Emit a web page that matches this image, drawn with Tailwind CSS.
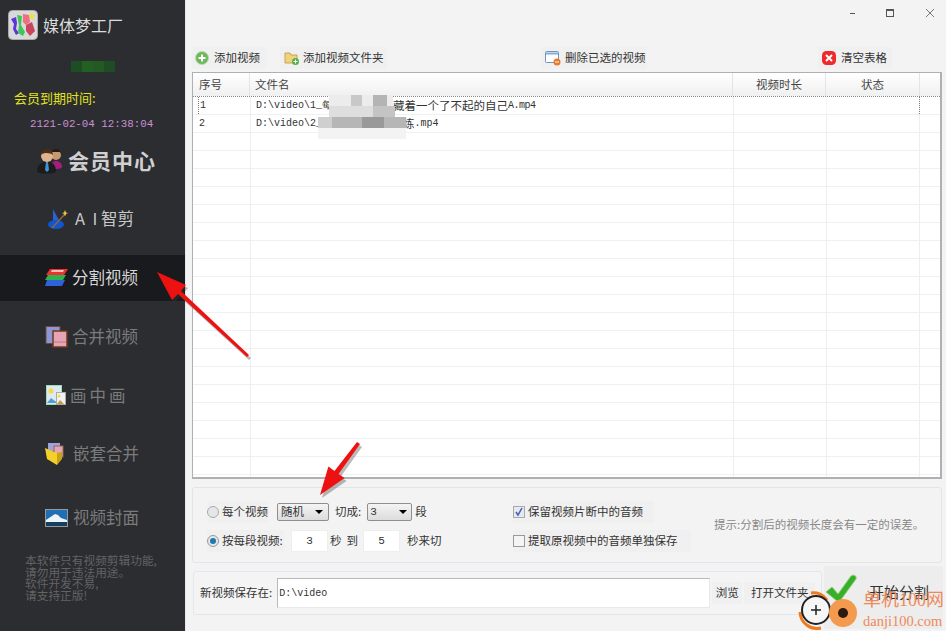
<!DOCTYPE html>
<html lang="zh">
<head>
<meta charset="utf-8">
<script src="https://cdn.jsdelivr.net/npm/@tailwindcss/browser@4"></script>
</head>
<body class="m-0">
<div class="relative w-[946px] h-[631px] overflow-hidden flex bg-[#f3f3f3] text-[11.5px] text-[#333] font-['Noto_Sans_CJK_SC','Noto_Sans',sans-serif]">

  <!-- Sidebar -->
  <aside class="w-[186px] h-full shrink-0 bg-[#2b2d31] border-r border-[#e8e8e8] flex flex-col">
    <div class="h-[43px] pt-[6px] pl-[8px] flex items-center gap-[5px]">
      <svg width="30" height="30" viewBox="0 0 30 30" class="shrink-0">
        <rect x="0.5" y="0.5" width="29" height="29" rx="4" fill="#d9d9d9" stroke="#aaa"/>
        <path d="M3 9l5-2 1 6-1 6 3 4-3 2-3-6 1-5z" fill="#5b35d8"/>
        <path d="M9 5l5 1-1 9 4 7-2 4-5-3 1-8z" fill="#3cc65b"/>
        <path d="M15 4l6 1 1 7-4 3-3-3z" fill="#ef6f7c"/>
        <path d="M22 3l5 2-2 5-3-2z" fill="#e9e04a"/>
        <path d="M18 15l6-3 3 9-5 5-4-5z" fill="#c9465e"/>
      </svg>
      <span class="text-[16px] leading-none text-[#dcdcdc]">媒体梦工厂</span>
    </div>
    <div class="h-[29px] flex items-end justify-center">
      <div class="flex h-[11px]">
        <div class="w-[11px] bg-[#1d4d23]"></div><div class="w-[11px] bg-[#215f23]"></div><div class="w-[11px] bg-[#235a24]"></div><div class="w-[11px] bg-[#1f4c24]"></div>
      </div>
    </div>
    <div class="mt-[16px] pl-[14px] h-[20px] leading-[20px] text-[13px] text-[#e2e21f]">会员到期时间:</div>
    <div class="mt-[7px] pl-[30px] h-[18px] leading-[18px] text-[10.800px] text-[#cc8fd4] font-['Liberation_Mono',monospace] whitespace-nowrap">2121-02-04 12:38:04</div>
    <nav class="mt-[-2px] flex flex-col">
      <div class="h-[58px] flex items-center gap-[3px] pl-[37px]">
        <svg width="28" height="28" viewBox="0 0 28 28" class="shrink-0">
          <circle cx="19" cy="9" r="5" fill="#c8996f"/><path d="M14 8a5 5 0 0 1 10 0l-1-2h-8z" fill="#2a1a12"/>
          <path d="M14 22c0-5 2-7 5-7s6 2 6 6c0 1-3 2-6 2z" fill="#a31f7d"/>
          <circle cx="10" cy="10" r="6" fill="#e0b48e"/><path d="M4 9a6 6 0 0 1 12 0c-2-2-9-3-12 0z" fill="#4c2e1a"/>
          <path d="M0 26c0-7 4-10 10-10s9 3 9 10c-4 2-15 2-19 0z" fill="#1c1c1c"/><path d="M9 16h2l1 8-2 2-2-2z" fill="#3f93d6"/>
        </svg>
        <span class="text-[21px] leading-none font-bold text-[#d0d0d0] font-['Noto_Sans_CJK_JP',serif] tracking-[1px]">会员中心</span>
      </div>
      <div class="h-[59px] flex items-center gap-[7px] pl-[48px]">
        <svg width="20" height="22" viewBox="0 0 20 22" class="shrink-0">
          <path d="M5 1l7 13H5z" fill="#2f5fd0"/><ellipse cx="8" cy="16.500" rx="8" ry="4.500" fill="#1255cc"/>
          <path d="M4 20L17 6" stroke="#8a6a3a" stroke-width="1.500"/><path d="M17 2l1 2.500 2 .5-2 1-1 2.500-1-2.500-2-1 2-.5z" fill="#f2c53a"/>
        </svg>
        <span class="text-[16.500px] leading-none text-[#c8c8c8] whitespace-pre">A  I 智剪</span>
      </div>
      <div class="h-[59px] flex items-center">
        <div class="w-full h-[46px] bg-[#191a1d] flex items-center gap-[4px] pl-[45px]">
          <svg width="23" height="18" viewBox="0 0 23 18" class="shrink-0">
            <path d="M5 0h18l-4 6H1z" fill="#ef3030"/><path d="M7 1h12l-1 2H6z" fill="#fbb"/>
            <path d="M3 6h18l-3 5H0z" fill="#2fb24a"/>
            <path d="M2 11h18l-3 6H0z" fill="#2d62d8"/>
          </svg>
          <span class="text-[16.500px] leading-none text-[#d6d6d6]">分割视频</span>
        </div>
      </div>
      <div class="h-[59px] flex items-center gap-[4px] pl-[45px]">
        <svg width="23" height="22" viewBox="0 0 23 22" class="shrink-0">
          <rect x="1" y="0.500" width="14" height="17" fill="#8f96d8" stroke="#6a4a30"/>
          <rect x="8" y="5" width="14" height="16" fill="#e6a4b4" stroke="#6d3a1e" stroke-width="1.500"/>
          <path d="M9 16h12" stroke="#b57f80"/>
        </svg>
        <span class="text-[16.500px] leading-none text-[#7b7b7b]">合并视频</span>
      </div>
      <div class="h-[58px] flex items-center gap-[4px] pl-[46px]">
        <svg width="20" height="20" viewBox="0 0 20 20" class="shrink-0">
          <rect x="0.500" y="0.500" width="15" height="19" fill="#dfe9f1" stroke="#9db"/>
          <circle cx="5" cy="6" r="2.500" fill="#f4dd3a"/><path d="M1 18l4-5 4 3 3 2z" fill="#4fa2cf"/>
          <rect x="10.500" y="7.500" width="9" height="12" fill="#eef2f5" stroke="#aaa"/>
          <circle cx="13" cy="11" r="1.500" fill="#f4dd3a"/><path d="M11 19l3-4 4 4z" fill="#c99a3f"/>
        </svg>
        <span class="text-[16.500px] leading-none text-[#7b7b7b] tracking-[3px]">画中画</span>
      </div>
      <div class="h-[59px] flex items-center gap-[9px] pl-[45px]">
        <svg width="19" height="22" viewBox="0 0 19 22" class="shrink-0">
          <rect x="3" y="0" width="12" height="8" fill="#9ea3dc"/><rect x="9" y="3" width="9" height="11" fill="#e6a4b4" stroke="#8a6a55"/>
          <path d="M0 5l12 5v12L2 16z" fill="#f5d028"/><path d="M12 10l5-1v7l-5 6z" fill="#c9a21a"/>
        </svg>
        <span class="text-[16.500px] leading-none text-[#7b7b7b]">嵌套合并</span>
      </div>
      <div class="mt-[5px] h-[59px] flex items-center gap-[5px] pl-[45px]">
        <svg width="23" height="18" viewBox="0 0 23 18" class="shrink-0">
          <rect x="0.500" y="0.500" width="22" height="17" fill="#1f6fb8" stroke="#999"/>
          <path d="M1 11l6-4 3-2 3 1 3 3 6 2v2H1z" fill="#eef3f6"/>
          <rect x="1" y="13" width="21" height="4" fill="#123f63"/>
        </svg>
        <span class="text-[16.500px] leading-none text-[#7b7b7b]">视频封面</span>
      </div>
    </nav>
    <p class="mt-[7px] pl-[25px] text-[11.700px] leading-[11.500px] text-[#636363] whitespace-nowrap">本软件只有视频剪辑功能,<br>请勿用于违法用途。<br>软件开发不易,<br>请支持正版!</p>
  </aside>

  <!-- Main -->
  <main class="flex-1 min-w-0 flex flex-col">
    <!-- window controls -->
    <div class="h-[47px] relative shrink-0">
      <div class="absolute top-[8px] right-[11px] flex items-center text-[#555]">
        <svg width="10" height="10" viewBox="0 0 10 10"><path d="M2 5.500h5" stroke="#555"/></svg>
        <svg class="ml-[27px]" width="10" height="10" viewBox="0 0 10 10"><rect x="1.500" y="1.500" width="7" height="7" fill="none" stroke="#555"/><path d="M1.500 2.500h7" stroke="#555"/></svg>
        <svg class="ml-[30px]" width="10" height="10" viewBox="0 0 10 10"><path d="M1 1l8 8M9 1l-8 8" stroke="#777"/></svg>
      </div>
    </div>
    <!-- toolbar -->
    <div class="h-[25px] shrink-0 flex pl-[6px]">
      <div class="w-[74px] h-[22px] bg-[#f0f0f0] flex items-center gap-[5px] pl-[3px]">
        <svg width="14" height="14" viewBox="0 0 14 14"><circle cx="7" cy="7" r="6.500" fill="#6db85a" stroke="#b9dcae"/><path d="M7 3.500v7M3.500 7h7" stroke="#fff" stroke-width="2"/></svg>
        <span>添加视频</span>
      </div>
      <div class="ml-[14px] w-[107px] h-[22px] bg-[#f0f0f0] flex items-center gap-[4px] pl-[4px]">
        <svg width="15" height="14" viewBox="0 0 15 14"><path d="M1 2h5l1 2h6v8H1z" fill="#f0d27e" stroke="#c9a24e"/><circle cx="11.500" cy="10.500" r="3.500" fill="#55b04a"/><path d="M11.500 8.500v4M9.500 10.500h4" stroke="#fff"/></svg>
        <span>添加视频文件夹</span>
      </div>
      <div class="ml-[154px] w-[106px] h-[22px] bg-[#f0f0f0] flex items-center gap-[4px] pl-[4px]">
        <svg width="16" height="15" viewBox="0 0 16 15"><rect x="0.500" y="0.500" width="13" height="11" rx="1" fill="#fff" stroke="#6f93bd"/><path d="M1 1.500h12v2H1z" fill="#86abd6"/><circle cx="12" cy="11" r="3.500" fill="#e8792b"/><path d="M10 11h4" stroke="#fff"/></svg>
        <span>删除已选的视频</span>
      </div>
      <div class="ml-[171px] w-[74px] h-[22px] bg-[#f0f0f0] flex items-center gap-[5px] pl-[4px]">
        <svg width="14" height="14" viewBox="0 0 14 14"><rect x="0" y="0" width="14" height="14" rx="4.500" fill="#ee2a2a"/><path d="M4 4l6 6M10 4l-6 6" stroke="#fff" stroke-width="2"/></svg>
        <span>清空表格</span>
      </div>
    </div>

    <!-- table -->
    <div class="ml-[6px] w-[750px] h-[407px] shrink-0 bg-white border border-[#aeb0b4] border-b-2 border-r-2 flex flex-col overflow-hidden">
      <div class="h-[24px] shrink-0 flex items-center bg-gradient-to-b from-white to-[#f0f0f0] text-[#444] border-b border-dotted border-[#888]">
        <div class="w-[57px] h-full pl-[6px] flex items-center border-r border-[#e4e4e4]">序号</div>
        <div class="w-[483px] h-full pl-[5px] flex items-center border-r border-[#e4e4e4]">文件名</div>
        <div class="w-[93px] h-full flex items-center justify-center border-r border-[#e4e4e4]">视频时长</div>
        <div class="w-[94px] h-full flex items-center justify-center border-r border-[#e4e4e4]">状态</div>
      </div>
      <div class="flex h-[18px] shrink-0 border-b border-[#f0f0f0] text-[10px] items-center text-[#333]"><div class="ml-[5px] w-[52px] h-full pl-[1px] border-l border-dotted border-[#777] flex items-center font-['Liberation_Mono',monospace]">1</div><div class="w-[483px] h-full pl-[5px] flex items-center border-l border-[#eee] whitespace-pre"><span class="font-['Liberation_Mono',monospace]">D:\video\1_每</span><span class="ml-[61px] text-[11.500px]">藏着一个了不起的自己</span><span class="font-['Liberation_Mono',monospace] tracking-[-0.500px]">A.mp4</span></div><div class="w-[93px] h-full border-l border-[#eee]"></div><div class="w-[94px] h-full border-l border-[#eee] border-r border-dotted border-r-[#777]"></div></div>
      <div class="flex h-[18px] shrink-0 border-b border-[#f0f0f0] text-[10px] items-center text-[#333]"><div class="ml-[5px] w-[52px] h-full pl-[1px] flex items-center font-['Liberation_Mono',monospace]">2</div><div class="w-[483px] h-full pl-[5px] flex items-center border-l border-[#eee] whitespace-pre"><span class="font-['Liberation_Mono',monospace]">D:\video\2_</span><span class="ml-[81px] text-[11.500px]">练</span><span class="font-['Liberation_Mono',monospace]">.mp4</span></div><div class="w-[93px] h-full border-l border-[#eee]"></div><div class="w-[94px] h-full border-x border-[#eee]"></div></div>
      <!-- empty rows -->
      <div class="flex-1 min-h-0 bg-[repeating-linear-gradient(to_bottom,white_0,white_17px,#f0f0f0_17px,#f0f0f0_18px)] flex">
        <div class="w-[57px] h-full"></div>
        <div class="w-[483px] h-full border-l border-[#eee]"></div>
        <div class="w-[93px] h-full border-l border-[#eee]"></div>
        <div class="w-[94px] h-full border-x border-[#eee]"></div>
      </div>
    </div>

    <!-- options -->
    <div class="ml-[6px] mt-[8px] w-[750px] h-[76px] shrink-0 border border-[#dfe5ea] rounded-[3px] flex">
      <div class="w-[320px] pl-[14px] pt-[13px] flex flex-col gap-[7px]">
        <div class="h-[22px] flex items-center">
          <div class="w-[62px] h-[22px] bg-[#f0f0f0] flex items-center gap-[3px]">
            <span class="w-[12px] h-[12px] rounded-full border border-[#aaa] bg-[#e6e6e6] shrink-0"></span><span class="whitespace-nowrap">每个视频</span>
          </div>
          <div class="ml-[8px] w-[52px] h-[18px] border border-[#8e8e8e] rounded-[2px] bg-gradient-to-b from-[#f4f4f4] to-[#dcdcdc] flex items-center justify-between px-[3px]"><span>随机</span><span class="w-0 h-0 border-x-[4px] border-x-transparent border-t-[4px] border-t-black mr-[2px]"></span></div>
          <span class="ml-[6px]">切成:</span>
          <div class="ml-[6px] w-[45px] h-[18px] border border-[#8e8e8e] rounded-[2px] bg-gradient-to-b from-[#f4f4f4] to-[#dcdcdc] flex items-center justify-between px-[2px] font-['Liberation_Mono',monospace] text-[11px]"><span>3</span><span class="w-0 h-0 border-x-[4px] border-x-transparent border-t-[4px] border-t-black mr-[2px]"></span></div>
          <span class="ml-[3px]">段</span>
        </div>
        <div class="h-[22px] flex items-center">
          <div class="w-[77px] h-[22px] bg-[#f0f0f0] flex items-center gap-[3px]">
            <span class="w-[12px] h-[12px] rounded-full border border-[#999] bg-[#e6e6e6] shrink-0 flex items-center justify-center"><span class="w-[6px] h-[6px] rounded-full bg-[#1f78b4]"></span></span><span class="whitespace-nowrap">按每段视频:</span>
          </div>
          <div class="ml-[7px] w-[37px] h-[22px] bg-white border border-[#eee] flex items-center justify-center font-['Liberation_Mono',monospace] text-[11px]">3</div>
          <span class="ml-[2px]">秒</span>
          <span class="ml-[5px]">到</span>
          <div class="ml-[5px] w-[37px] h-[22px] bg-white border border-[#eee] flex items-center justify-center font-['Liberation_Mono',monospace] text-[11px]">5</div>
          <span class="ml-[7px]">秒来切</span>
        </div>
      </div>
      <div class="w-[201px] pt-[13px] flex flex-col gap-[7px]">
        <div class="w-[141px] h-[22px] bg-[#f0f0f0] flex items-center gap-[3px] whitespace-nowrap"><span class="w-[12px] h-[12px] border border-[#aaa] bg-[#e4e8f2] flex items-center justify-center shrink-0"><svg width="10" height="10" viewBox="0 0 10 10"><path d="M2 5l2 3 4-7" fill="none" stroke="#4a5fa8" stroke-width="1.500"/></svg></span>保留视频片断中的音频</div>
        <div class="w-[178px] h-[22px] bg-[#f0f0f0] flex items-center gap-[3px] whitespace-nowrap"><span class="w-[12px] h-[12px] border border-[#999] bg-[#f4f4f4] shrink-0"></span>提取原视频中的音频单独保存</div>
      </div>
      <div class="pt-[28px] text-[#888] whitespace-nowrap">提示:分割后的视频长度会有一定的误差。</div>
    </div>

    <!-- save row -->
    <div class="ml-[6px] mt-[3px] flex h-[63px]">
      <div class="mt-[5px] ml-[1px] w-[629px] h-[44px] border border-[#e3e7ea] rounded-[3px] bg-[#f4f4f4] flex items-center pl-[6px] whitespace-nowrap">
        <span>新视频保存在:</span>
        <div class="ml-[5px] w-[433px] h-[30px] bg-white border border-[#b8b8b8] border-b-[#e8e8e8] border-r-[#e8e8e8] flex items-center pl-[1px] text-[10px] font-['Liberation_Mono',monospace]">D:\video</div>
        <div class="ml-[2px] w-[30px] h-[22px] bg-[#f0f0f0] flex items-center justify-center">浏览</div>
        <div class="ml-[2px] w-[71px] h-[22px] bg-[#f0f0f0] flex items-center justify-center">打开文件夹</div>
      </div>
      <div class="ml-[2px] w-[119px] h-[63px] bg-[#ededed] flex items-start pl-[45px] pt-[15px] text-[15px] whitespace-nowrap text-[#333]">开始分割</div>
    </div>
  </main>

  <!-- Overlays: mosaic over filenames -->
  <svg class="absolute left-[315px] top-[93px] pointer-events-none" width="100" height="48" viewBox="0 0 100 48">
    <g>
      <rect x="14" y="2" width="64" height="11" fill="#ececec"/><rect x="36" y="2" width="11" height="11" fill="#c8c8c8"/><rect x="58" y="2" width="14" height="11" fill="#b4b4b4"/>
      <rect x="14" y="13" width="66" height="11" fill="#dedede"/><rect x="58" y="13" width="22" height="11" fill="#c4c4c4"/>
      <rect x="3" y="24" width="88" height="11" fill="#b6b6b6"/><rect x="47" y="24" width="22" height="11" fill="#999"/><rect x="3" y="24" width="14" height="11" fill="#cfcfcf"/>
      <rect x="3" y="35" width="88" height="11" fill="#f3f3f3"/>
    </g>
  </svg>

  <!-- Red arrows -->
  <svg class="absolute inset-0 pointer-events-none" width="946" height="631" viewBox="0 0 946 631">
    <g fill="#3a3a3a" opacity="0.35" transform="translate(2 3)">
      <path d="M157 272L186 285 181 291 249 355 247 357 178 294 172 300z"/>
      <path d="M320 495L328.400 466.500 334.500 471 357 442 360 444 338.500 474 344.600 478z"/>
    </g>
    <path d="M157 272L186 285 181 291 249 355 247 357 178 294 172 300z" fill="#ee1111"/>
    <path d="M320 495L328.400 466.500 334.500 471 357 442 360 444 338.500 474 344.600 478z" fill="#ee1111"/>
  </svg>

  <!-- Start check -->
  <svg class="absolute left-[824px] top-[574px] pointer-events-none" width="34" height="30" viewBox="0 0 34 30">
    <path d="M2 18l6-5 6 7L27 2c3-2 6 0 5 3L16 27h-3z" fill="#36b02a" stroke="#8fcf70"/>
  </svg>

  <!-- Watermark -->
  <div class="absolute left-[797px] top-[590px] w-[149px] h-[41px] pointer-events-none">
    <svg class="absolute left-0 top-0" width="66" height="41" viewBox="0 0 66 41">
      <path d="M3 22A17 17 0 0 0 24 38" fill="none" stroke="#f07a20" stroke-width="3"/>
      <path d="M14 3A16 16 0 0 1 30 10" fill="none" stroke="#f07a20" stroke-width="3"/>
      <circle cx="19" cy="20" r="14" fill="#f6f6f6" stroke="#222" stroke-width="2"/>
      <path d="M19 15v10M14 20h10" stroke="#222" stroke-width="1.500"/>
      <circle cx="46" cy="23" r="14" fill="#f39a4e"/>
      <circle cx="46" cy="23" r="5" fill="#2a1a10"/>
    </svg>
    <span class="absolute left-[66px] top-[-2px] text-[18px] leading-[24px] text-[#ee8a5a] font-['Liberation_Serif','Noto_Sans_CJK_SC',serif] whitespace-nowrap">单机100网</span>
    <span class="absolute left-[66px] top-[22px] text-[14.500px] leading-[18px] text-[#ee8a5a] font-['Liberation_Serif',serif] whitespace-nowrap">danji100.com</span>
  </div>
</div>
</body>
</html>
